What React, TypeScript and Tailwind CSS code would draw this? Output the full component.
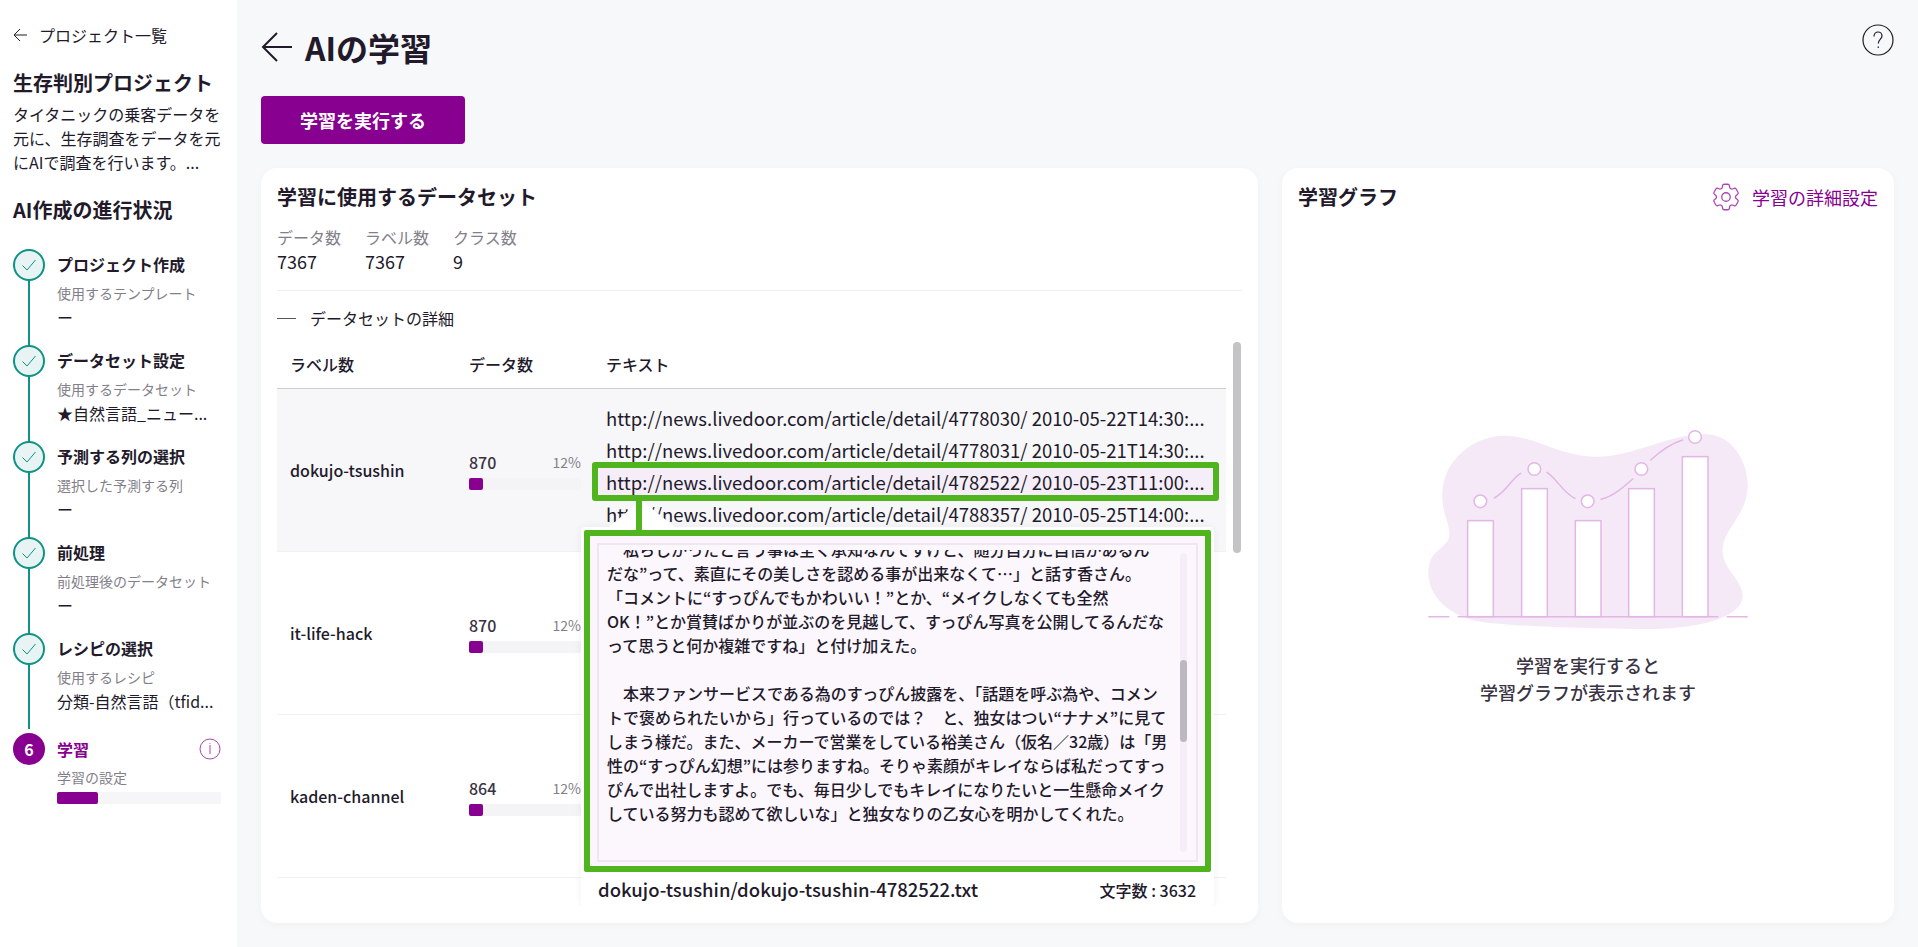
import React from "react";

const font = { fontFamily: '"Noto Sans CJK JP", "Noto Sans", sans-serif' };

function Check() {
  return (
    <div className="relative z-10 flex h-8 w-8 shrink-0 items-center justify-center rounded-full border-2 border-[#0e9384] bg-[#e7f4f3]">
      <svg width="16" height="16" viewBox="0 0 16 16" fill="none" stroke="#0e9384" strokeWidth="1">
        <path d="M1.5 8.5 L6 13 L14.5 3" />
      </svg>
    </div>
  );
}

const steps = [
  ["プロジェクト作成", "使用するテンプレート", "ー"],
  ["データセット設定", "使用するデータセット", "★自然言語_ニュー..."],
  ["予測する列の選択", "選択した予測する列", "ー"],
  ["前処理", "前処理後のデータセット", "ー"],
  ["レシピの選択", "使用するレシピ", "分類-自然言語（tfid..."],
];

function Sidebar() {
  return (
    <aside className="flex h-full w-[237px] shrink-0 flex-col bg-white pl-[13px] pt-[24px] text-[#221a2b]">
      <div className="flex h-[22px] items-center text-[16px] leading-[22px]">
        <svg width="15" height="14" viewBox="0 0 15 14" fill="none" stroke="#221a2b" strokeWidth="1">
          <path d="M14 7 H1 M7 1 L1 7 L7 13" />
        </svg>
        <span className="ml-[11px]">プロジェクト一覧</span>
      </div>
      <div className="mt-[22px] text-[20px] font-bold leading-[30px]">生存判別プロジェクト</div>
      <p className="mt-[4px] w-[212px] text-[16px] leading-[24px]">
        タイタニックの乗客データを元に、生存調査をデータを元にAIで調査を行います。...
      </p>
      <div className="mt-[21px] text-[20px] font-bold leading-[30px]">AI作成の進行状況</div>
      <div className="mt-[24px] flex flex-col">
        {steps.map((s, i) => (
          <div key={s[0]} className="relative flex h-[96px]">
            <div className={`absolute left-[15px] top-[16px] w-[2px] bg-[#0e9384] ${i === 4 ? "h-[80px]" : "h-[96px]"}`} />
            <Check />
            <div className="ml-[12px] min-w-0 flex-1">
              <div className="h-[31px] text-[16px] font-bold leading-[31px]">{s[0]}</div>
              <div className="mt-[2px] h-[22px] text-[14px] leading-[22px] text-[#837f8a]">{s[1]}</div>
              <div className="mt-[1px] text-[16px] leading-[24px]">{s[2]}</div>
            </div>
          </div>
        ))}
        <div className="relative mt-[4px] flex">
          <div className="flex h-8 w-8 shrink-0 items-center justify-center rounded-full bg-[#870090] text-[16px] font-bold text-white">6</div>
          <div className="ml-[12px] w-[164px]">
            <div className="flex h-[32px] items-center justify-between text-[16px] font-bold text-[#870090]">
              <span>学習</span>
              <svg width="22" height="22" viewBox="0 0 22 22" fill="none" stroke="#a947b1" strokeWidth="1">
                <circle cx="11" cy="11" r="10" />
                <path d="M11 7 V16 M11 5 V5.8" />
              </svg>
            </div>
            <div className="mt-[2px] h-[20px] text-[14px] leading-[20px] text-[#837f8a]">学習の設定</div>
            <div className="mt-[5px] h-[12px] w-[164px] rounded-[2px] bg-[#f6f6f8]">
              <div className="h-full w-[41px] rounded-[2px] bg-[#870090]" />
            </div>
          </div>
        </div>
      </div>
    </aside>
  );
}

function Row({ label, n, urls, active }: { label: string; n: string; urls?: string[]; active?: boolean }) {
  return (
    <div className={`flex h-[163px] shrink-0 items-center border-b border-[#f1f1f3] ${active ? "bg-[#f7f7f9]" : ""}`}>
      <div className="w-[192px] pl-[13px] text-[16px] font-medium">{label}</div>
      <div className="w-[112px]">
        <div className="flex items-center justify-between">
          <span className="text-[16px] font-medium text-[#3a3344]">{n}</span>
          <span className="text-[14px] text-[#837f8a]">12%</span>
        </div>
        <div className="mt-[4px] h-[12px] rounded-[2px] bg-[#f4f4f6]">
          <div className="h-full w-[14px] rounded-[2px] bg-[#870090]" />
        </div>
      </div>
      {urls ? (
        <div className="ml-[25px] mb-[8px] flex flex-col whitespace-nowrap text-[18.5px] leading-[32px]">
          {urls.map((u, i) => (
            <div key={u} className={i === 2 ? "-mx-[8px] bg-[#f5eef8] px-[8px]" : ""}>{u}</div>
          ))}
        </div>
      ) : null}
    </div>
  );
}

const popupLines = [
  "　私らしかったと言う事は全く承知なんですけど、随分自分に自信があるん",
  "だな”って、素直にその美しさを認める事が出来なくて…」と話す香さん。",
  "「コメントに“すっぴんでもかわいい！”とか、“メイクしなくても全然",
  "OK！”とか賞賛ばかりが並ぶのを見越して、すっぴん写真を公開してるんだな",
  "って思うと何か複雑ですね」と付け加えた。",
  "\u00a0",
  "　本来ファンサービスである為のすっぴん披露を、「話題を呼ぶ為や、コメン",
  "トで褒められたいから」行っているのでは？　と、独女はつい“ナナメ”に見て",
  "しまう様だ。また、メーカーで営業をしている裕美さん（仮名／32歳）は「男",
  "性の“すっぴん幻想”には参りますね。そりゃ素顔がキレイならば私だってすっ",
  "ぴんで出社しますよ。でも、毎日少しでもキレイになりたいと一生懸命メイク",
  "している努力も認めて欲しいな」と独女なりの乙女心を明かしてくれた。",
];

function Popup() {
  return (
    <div className="absolute left-[304px] top-[138px] w-[633px] rounded-[4px] bg-white px-[3px] pt-[3px] shadow-[0_0_8px_rgba(0,0,0,0.06)]">
      <div className="absolute -top-[27px] left-[28px] h-0 w-0 border-b-[27px] border-l-[32px] border-r-[34px] border-b-white border-l-transparent border-r-transparent" />
      <div className="relative rounded-[2px] border-[6px] border-[#4fb41d] bg-[#fcf5fd] px-[7px] pb-[4px] pt-[7px]">
        <div className="relative h-[319px] border-2 border-[#eee7f0] bg-[#fcf6fd] py-[5px]">
          <div className="h-[302px] overflow-hidden pl-[8px] text-[16px] font-medium leading-[24px] whitespace-nowrap">
            <div className="-mt-[13px]">
              {popupLines.map((l, i) => (
                <div key={i}>{l}</div>
              ))}
            </div>
          </div>
          <div className="absolute right-[9px] top-[8px] h-[299px] w-[7px] rounded bg-[#f5eef8]">
            <div className="mt-[107px] h-[82px] rounded bg-[#bdb7c0]" />
          </div>
        </div>
      </div>
      <div className="flex h-[35px] items-center justify-between pl-[14px] pr-[15px]">
        <span className="text-[18.5px] font-medium">dokujo-tsushin/dokujo-tsushin-4782522.txt</span>
        <span className="text-[16px] font-medium">文字数 : 3632</span>
      </div>
    </div>
  );
}

function Illustration() {
  const bars: [number, number][] = [
    [203, 362],
    [365, 266],
    [526, 362],
    [686, 266],
    [847, 170],
  ];
  const dots: [number, number][] = [
    [241, 304],
    [403, 207],
    [563, 304],
    [724, 207],
    [885, 111],
  ];
  return (
    <svg width="376" height="250" viewBox="0 0 1128 750" fill="none" stroke="#e2b7e6" strokeWidth="4.5">
      <path
        stroke="none"
        fill="#f5e9f7"
        d="M315 107 C400 107 470 165 580 170 C700 175 800 100 920 103 C1000 105 1045 190 1043 260 C1040 350 965 390 968 455 C970 510 1030 540 1028 590 C1025 650 900 690 720 687 C550 685 350 680 240 665 C150 650 85 590 85 520 C85 440 150 450 148 400 C146 360 125 340 127 280 C130 180 220 107 315 107 Z"
      />
      {bars.map(([x, y]) => (
        <rect key={x} x={x} y={y} width="77" height={650 - y} fill="#fff" />
      ))}
      <path d="M85 650 H148 M173 650 H955 M980 650 H1043" />
      <path d="M283 294 C320 275 335 235 362 220" strokeLinecap="round" />
      <path d="M441 217 C470 235 490 280 525 295" strokeLinecap="round" />
      <path d="M603 298 C640 288 670 262 698 237" strokeLinecap="round" />
      <path d="M752 180 C785 150 815 130 848 120" strokeLinecap="round" />
      {dots.map(([x, y]) => (
        <circle key={x} cx={x} cy={y} r="19" fill="#fff" />
      ))}
    </svg>
  );
}

export default function App() {
  const urls = [
    "http://news.livedoor.com/article/detail/4778030/ 2010-05-22T14:30:...",
    "http://news.livedoor.com/article/detail/4778031/ 2010-05-21T14:30:...",
    "http://news.livedoor.com/article/detail/4782522/ 2010-05-23T11:00:...",
    "http://news.livedoor.com/article/detail/4788357/ 2010-05-25T14:00:...",
  ];
  return (
    <div style={font} className="flex h-[947px] w-full overflow-hidden bg-[#f7f8fa] text-[#221a2b]">
      <Sidebar />
      <main className="flex min-w-0 flex-1 flex-col px-[24px]">
        <div className="flex h-[96px] shrink-0 items-start justify-between pt-[23px]">
          <div className="flex h-[48px] items-center">
            <svg width="32" height="30" viewBox="0 0 32 30" fill="none" stroke="#221a2b" strokeWidth="2">
              <path d="M31 15 H2 M16 1 L2 15 L16 29" />
            </svg>
            <h1 className="ml-[12px] text-[32px] font-bold leading-[48px]">AIの学習</h1>
          </div>
          <svg className="mt-[1px]" width="32" height="32" viewBox="0 0 32 32" fill="none" stroke="#221a2b" strokeWidth="1.2">
            <circle cx="16" cy="16" r="15" />
            <path d="M12 12.5 C12 9.5 14 8 16 8 C18.5 8 20 10 20 12 C20 15 16.3 15.5 16.3 19.5 M16.3 22.5 V24" />
          </svg>
        </div>
        <button className="h-[48px] w-[204px] shrink-0 rounded-[4px] bg-[#870090] text-[18px] font-bold text-white">学習を実行する</button>
        <div className="mt-[24px] flex h-[755px] gap-[24px]">
          <section className="flex w-[997px] shrink-0 flex-col overflow-hidden rounded-[16px] bg-white pl-[16px] pr-[16px] pb-[17px] pt-[14px] shadow-[0_2px_8px_rgba(0,0,0,0.03)]">
            <h2 className="text-[20px] font-bold leading-[30px]">学習に使用するデータセット</h2>
            <div className="mt-[13px] flex gap-[24px] border-b border-[#eeeef0] pb-[16px] leading-[25px]">
              {[
                ["データ数", "7367"],
                ["ラベル数", "7367"],
                ["クラス数", "9"],
              ].map(([a, b]) => (
                <div key={a} className="w-[64px]">
                  <div className="text-[16px] text-[#837f8a]">{a}</div>
                  <div className="-mt-[1px] text-[18px]">{b}</div>
                </div>
              ))}
            </div>
            <div className="mt-[15px] flex h-[24px] items-center text-[16px]">
              <div className="h-px w-[19px] bg-[#555]" />
              <span className="ml-[14px]">データセットの詳細</span>
            </div>
            <div className="relative mt-[10px] min-h-0 flex-1 overflow-hidden pr-[16px]">
              <div className="absolute right-[1px] top-[2px] h-[211px] w-[8px] rounded-[4px] bg-[#c4c4c6]" />
              <div className="flex h-[49px] items-center border-b border-[#ccc] text-[16px] font-medium">
                <div className="w-[192px] pl-[13px]">ラベル数</div>
                <div className="w-[137px]">データ数</div>
                <div>テキスト</div>
              </div>
              <div className="relative">
                <Row label="dokujo-tsushin" n="870" urls={urls} active />
                <Row label="it-life-hack" n="870" />
                <Row label="kaden-channel" n="864" />
                <Popup />
                <div className="absolute left-[315px] top-[73px] h-[39px] w-[627px] rounded-[3px] border-[6px] border-[#4fb41d]" />
                <div className="absolute left-[359px] top-[112px] h-[29px] w-[6px] bg-[#4fb41d]" />
              </div>
            </div>
          </section>
          <section className="flex min-w-0 flex-1 flex-col rounded-[16px] bg-white px-[16px] pt-[14px] shadow-[0_2px_8px_rgba(0,0,0,0.03)]">
            <div className="flex h-[30px] items-center justify-between">
              <h2 className="text-[20px] font-bold">学習グラフ</h2>
              <div className="flex items-center text-[18px] text-[#870090]">
                <svg width="34" height="34" viewBox="0 0 24 24" fill="none" stroke="#a947b1" strokeWidth="0.9">
                  <path d="M9.594 3.94c.09-.542.56-.94 1.11-.94h2.593c.55 0 1.02.398 1.11.94l.213 1.281c.063.374.313.686.645.87.074.04.147.083.22.127.325.196.72.257 1.075.124l1.217-.456a1.125 1.125 0 0 1 1.37.49l1.296 2.247a1.125 1.125 0 0 1-.26 1.431l-1.003.827c-.293.241-.438.613-.43.992a7.723 7.723 0 0 1 0 .255c-.008.378.137.75.43.991l1.004.827c.424.35.534.955.26 1.43l-1.298 2.247a1.125 1.125 0 0 1-1.369.491l-1.217-.456c-.355-.133-.75-.072-1.076.124a6.47 6.47 0 0 1-.22.128c-.331.183-.581.495-.644.869l-.213 1.281c-.09.543-.56.94-1.11.94h-2.594c-.55 0-1.019-.398-1.11-.94l-.213-1.281c-.062-.374-.312-.686-.644-.87a6.52 6.52 0 0 1-.22-.127c-.325-.196-.72-.257-1.076-.124l-1.217.456a1.125 1.125 0 0 1-1.369-.49l-1.297-2.247a1.125 1.125 0 0 1 .26-1.431l1.004-.827c.292-.24.437-.613.43-.991a6.932 6.932 0 0 1 0-.255c.007-.38-.138-.751-.43-.992l-1.004-.827a1.125 1.125 0 0 1-.26-1.43l1.297-2.247a1.125 1.125 0 0 1 1.37-.491l1.216.456c.356.133.751.072 1.076-.124.072-.044.146-.086.22-.128.332-.183.582-.495.644-.869l.214-1.28Z" />
                  <circle cx="12" cy="12" r="3" />
                </svg>
                <span className="ml-[9px]">学習の詳細設定</span>
              </div>
            </div>
            <div className="mt-[188px] flex flex-col items-center">
              <Illustration />
              <div className="mt-[2px] text-center text-[18px] font-medium leading-[27px] text-[#3a3344]">
                学習を実行すると
                <br />
                学習グラフが表示されます
              </div>
            </div>
          </section>
        </div>
      </main>
    </div>
  );
}
